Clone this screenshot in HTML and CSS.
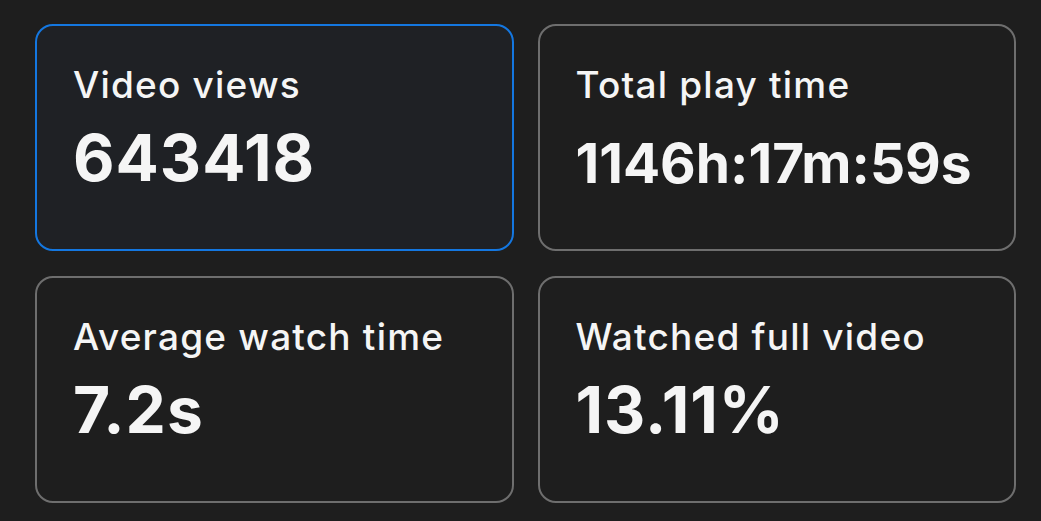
FILE: index.html
```html
<!DOCTYPE html>
<html>
<head>
  <title>Video Stats</title>
  <link rel="stylesheet" href="styles.css">
</head>
<body>
  <div class="stats">
    <div class="card active">
      <div class="label">Video views</div>
      <div class="value">643418</div>
    </div>
    <div class="card">
      <div class="label">Total play time</div>
      <div class="value value-sm">1146h:17m:59s</div>
    </div>
    <div class="card">
      <div class="label">Average watch time</div>
      <div class="value">7.2s</div>
    </div>
    <div class="card">
      <div class="label">Watched full video</div>
      <div class="value">13.11%</div>
    </div>
  </div>
</body>
</html>
```

FILE: styles.css
```css
body {
  margin: 0;
  background-color: #1e1e1e;
  font-family: Inter, "Noto Sans", sans-serif;
  color: #f5f5f5;
}

.stats {
  display: grid;
  grid-template-columns: minmax(0, 1fr) minmax(0, 1fr);
  grid-auto-rows: 227px;
  gap: 25px 24px;
  padding: 24px 25px 18px 35px;
}

.card {
  border: 2px solid #6e6e6e;
  border-radius: 18px;
  padding: 37px 36px 0;
  overflow: hidden;
}

.card.active {
  border-color: #1477e0;
  background-color: #1f2125;
}

.label {
  font-size: 37px;
  font-weight: 500;
  line-height: 44px;
  letter-spacing: 1.2px;
}

.value {
  margin-top: 12px;
  font-size: 64px;
  font-weight: 700;
  line-height: 77px;
  letter-spacing: 1px;
  white-space: nowrap;
}

.value-sm {
  padding-top: 6px;
  font-size: 55px;
  letter-spacing: 0;
}
```
